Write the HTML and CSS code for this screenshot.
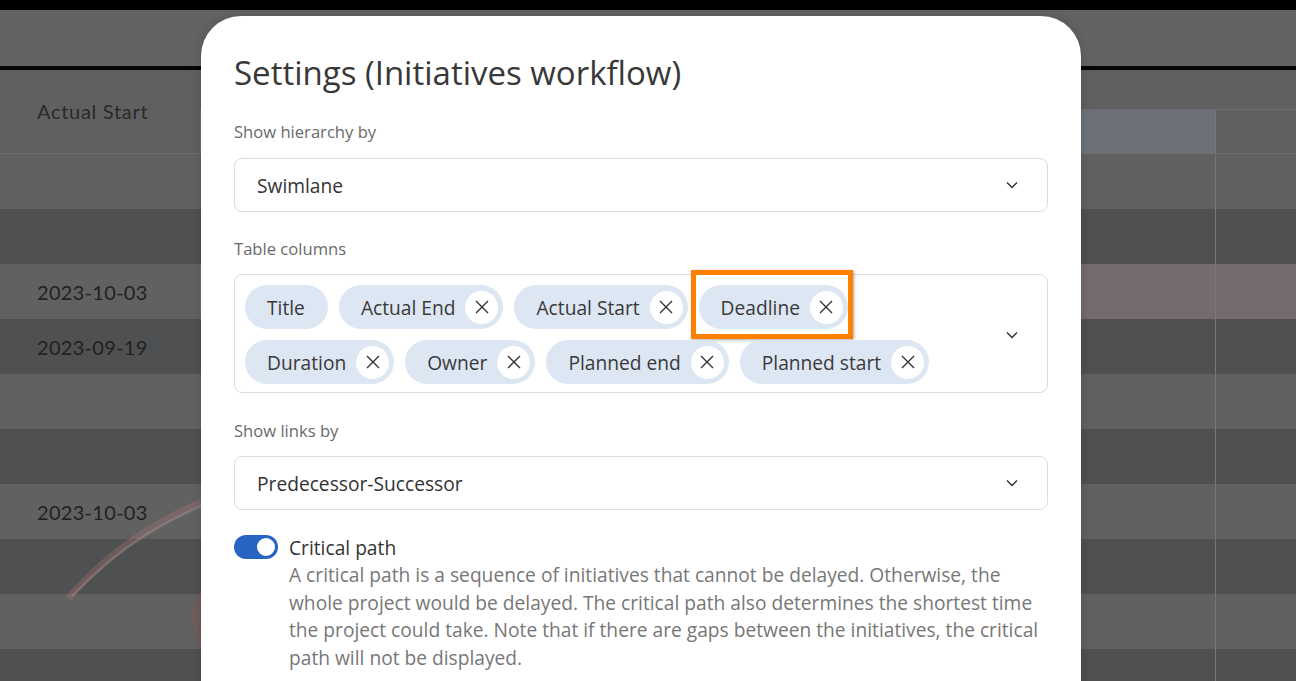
FILE: index.html
```html
<html>
   <head>
      <link rel="stylesheet" href="styles.css">
   </head>
   <body>
      <!-- page behind the dialog (dimmed) -->
      <div class="app">
         <div class="topbar"></div>
         <div class="toolbar"></div>
         <div class="thead">
            <div class="col-date th">Actual Start</div>
            <div class="tl-head">
               <div class="tl-head-top"></div>
               <div class="tl-head-bottom">
                  <div class="tl-cell tl-now"></div>
                  <div class="tl-cell tl-last"></div>
               </div>
            </div>
         </div>
         <div class="row light"><div class="col-date"></div><div class="tl"><div class="tl-cell"></div><div class="tl-cell tl-last"></div></div></div>
         <div class="row dark"><div class="col-date"></div><div class="tl"><div class="tl-cell"></div><div class="tl-cell tl-last"></div></div></div>
         <div class="row light"><div class="col-date">2023-10-03</div><div class="tl pink"><div class="tl-cell"></div><div class="tl-cell tl-last"></div></div></div>
         <div class="row dark"><div class="col-date">2023-09-19</div><div class="tl"><div class="tl-cell"></div><div class="tl-cell tl-last"></div></div></div>
         <div class="row light"><div class="col-date"></div><div class="tl"><div class="tl-cell"></div><div class="tl-cell tl-last"></div></div></div>
         <div class="row dark"><div class="col-date"></div><div class="tl"><div class="tl-cell"></div><div class="tl-cell tl-last"></div></div></div>
         <div class="row light"><div class="col-date">2023-10-03</div><div class="tl"><div class="tl-cell"></div><div class="tl-cell tl-last"></div></div></div>
         <div class="row dark"><div class="col-date"></div><div class="tl"><div class="tl-cell"></div><div class="tl-cell tl-last"></div></div></div>
         <div class="row light"><div class="col-date"></div><div class="tl"><div class="tl-cell"></div><div class="tl-cell tl-last"></div></div></div>
         <div class="row dark"><div class="col-date"></div><div class="tl"><div class="tl-cell"></div><div class="tl-cell tl-last"></div></div></div>
         <!-- faint link curve drawn on the gantt -->
         <svg class="curve" width="300" height="260" viewBox="0 0 300 260">
            <path d="M68 118 C 110 72, 160 32, 260 0" fill="none" stroke="rgba(185,120,120,0.28)" stroke-width="7"/>
            <path d="M72 116 C 114 72, 164 34, 262 4" fill="none" stroke="rgba(230,230,230,0.16)" stroke-width="2.5"/>
            <path d="M203 165 C 190 135, 196 118, 212 110" fill="none" stroke="rgba(150,85,85,0.3)" stroke-width="8"/>
         </svg>
      </div>

      <!-- settings dialog -->
      <div class="modal">
         <h1 class="modal-title">Settings (Initiatives workflow)</h1>

         <div class="field first">
            <div class="field-label">Show hierarchy by</div>
            <div class="select">
               <span>Swimlane</span>
               <svg class="chevron" width="12" height="8" viewBox="0 0 12 8"><path d="M1 1.5 L6 6.5 L11 1.5" fill="none" stroke="#333" stroke-width="1.5"/></svg>
            </div>
         </div>

         <div class="field">
            <div class="field-label">Table columns</div>
            <div class="multi">
               <div class="chips">
                  <span class="chip plain">Title</span>
                  <span class="chip">Actual End<span class="chip-x"><svg width="14" height="14" viewBox="0 0 14 14"><path d="M1 1 L13 13 M13 1 L1 13" stroke="#333" stroke-width="1.4"/></svg></span></span>
                  <span class="chip">Actual Start<span class="chip-x"><svg width="14" height="14" viewBox="0 0 14 14"><path d="M1 1 L13 13 M13 1 L1 13" stroke="#333" stroke-width="1.4"/></svg></span></span>
                  <span class="chip marked">Deadline<span class="chip-x"><svg width="14" height="14" viewBox="0 0 14 14"><path d="M1 1 L13 13 M13 1 L1 13" stroke="#333" stroke-width="1.4"/></svg></span></span>
                  <span class="chip">Duration<span class="chip-x"><svg width="14" height="14" viewBox="0 0 14 14"><path d="M1 1 L13 13 M13 1 L1 13" stroke="#333" stroke-width="1.4"/></svg></span></span>
                  <span class="chip">Owner<span class="chip-x"><svg width="14" height="14" viewBox="0 0 14 14"><path d="M1 1 L13 13 M13 1 L1 13" stroke="#333" stroke-width="1.4"/></svg></span></span>
                  <span class="chip">Planned end<span class="chip-x"><svg width="14" height="14" viewBox="0 0 14 14"><path d="M1 1 L13 13 M13 1 L1 13" stroke="#333" stroke-width="1.4"/></svg></span></span>
                  <span class="chip">Planned start<span class="chip-x"><svg width="14" height="14" viewBox="0 0 14 14"><path d="M1 1 L13 13 M13 1 L1 13" stroke="#333" stroke-width="1.4"/></svg></span></span>
               </div>
               <svg class="chevron" width="12" height="8" viewBox="0 0 12 8"><path d="M1 1.5 L6 6.5 L11 1.5" fill="none" stroke="#333" stroke-width="1.5"/></svg>
            </div>
         </div>

         <div class="field links">
            <div class="field-label">Show links by</div>
            <div class="select">
               <span>Predecessor-Successor</span>
               <svg class="chevron" width="12" height="8" viewBox="0 0 12 8"><path d="M1 1.5 L6 6.5 L11 1.5" fill="none" stroke="#333" stroke-width="1.5"/></svg>
            </div>
         </div>

         <div class="switch-row">
            <div class="toggle"><div class="knob"></div></div>
            <div class="switch-text">
               <div class="switch-title">Critical path</div>
               <div class="switch-desc">A critical path is a sequence of initiatives that cannot be delayed. Otherwise, the whole project would be delayed. The critical path also determines the shortest time the project could take. Note that if there are gaps between the initiatives, the critical path will not be displayed.</div>
            </div>
         </div>
      </div>
   </body>
</html>
```

FILE: styles.css
```css
*
{
   margin: 0px;
   box-sizing: border-box;
}
body
{
   background-color: #4f5051;
   overflow: hidden;
   font-family: "Open Sans", "Noto Sans", sans-serif;
}
/* dimmed page */
.app
{
   position: relative;
   height: 681px;
   overflow: hidden;
   font-family: Lato, "Open Sans", sans-serif;
   color: #262626;
}
.topbar
{
   height: 10px;
   background-color: #000;
}
.toolbar
{
   height: 56px;
   background-color: #636363;
   border-bottom: 4px solid #050505;
   box-sizing: content-box;
}
.thead
{
   display: flex;
   height: 84px;
   background-color: #606060;
   border-bottom: 1px solid #6f6f6f;
}
.col-date
{
   width: 200px;
   padding-left: 37px;
   display: flex;
   align-items: center;
   font-size: 20px;
   letter-spacing: 0.3px;
   color: #222;
   flex-shrink: 0;
}
.th
{
   color: #2a2a2a;
   letter-spacing: 0.7px;
   padding-bottom: 2px;
}
.tl-head
{
   flex: 1;
   display: flex;
   flex-direction: column;
}
.tl-head-top
{
   height: 40px;
   border-bottom: 1px solid #6d6d6d;
}
.tl-head-bottom
{
   flex: 1;
   display: flex;
}
.tl-cell
{
   flex: 1;
}
.tl-now
{
   background-color: #6c7079;
}
.tl-last
{
   flex: 0 0 81px;
   border-left: 1px solid #777;
}
.row
{
   display: flex;
   height: 55px;
}
.light
{
   background-color: #616161;
}
.dark
{
   background-color: #4f5051;
}
.tl
{
   flex: 1;
   display: flex;
}
.pink
{
   background-color: #756a6c;
}
.curve
{
   position: absolute;
   left: 0px;
   top: 480px;
}

/* dialog */
.modal
{
   position: absolute;
   left: 201px;
   top: 16px;
   width: 880px;
   height: 720px;
   background-color: #fff;
   border-radius: 40px;
   padding: 37px 33px 0px 33px;
   box-shadow: 0px 0px 12px rgba(0, 0, 0, 0.15);
}
.modal-title
{
   font-size: 33px;
   line-height: 40px;
   font-weight: 400;
   color: #383838;
}
.field
{
   margin-top: 26px;
}
.field.first
{
   margin-top: 28px;
}
.field.links
{
   margin-top: 27px;
}
.field-label
{
   font-size: 16.6px;
   line-height: 22px;
   color: #6a6a6a;
   margin-bottom: 14px;
}
.field.first .field-label
{
   margin-bottom: 15px;
}
.select
{
   height: 54px;
   border: 1px solid #d5dde5;
   border-radius: 8px;
   display: flex;
   align-items: center;
   justify-content: space-between;
   padding: 0px 29px 0px 22px;
   font-size: 19.2px;
   color: #333;
}
.multi
{
   border: 1px solid #d5dde5;
   border-radius: 8px;
   display: flex;
   align-items: center;
   padding: 10px 29px 8px 10px;
}
.chips
{
   flex: 1;
   display: flex;
   flex-wrap: wrap;
   gap: 11px;
   margin-right: 40px;
}
.chip
{
   position: relative;
   height: 44px;
   display: flex;
   align-items: center;
   background-color: #dde6f3;
   border-radius: 22px;
   padding: 0px 5px 0px 22px;
   font-size: 19.2px;
   color: #3a3a3a;
}
.chip.plain
{
   padding-right: 23px;
}
.chip-x
{
   width: 33px;
   height: 33px;
   margin-left: 10px;
   border-radius: 50%;
   background-color: #fff;
   display: flex;
   align-items: center;
   justify-content: center;
}
/* orange callout around the chip */
.chip.marked::after
{
   content: "";
   position: absolute;
   left: -8px;
   right: -5px;
   top: -15px;
   bottom: -10px;
   border: 5px solid #ff8000;
   box-shadow: 1px 1px 3px rgba(0, 0, 0, 0.35);
}
.switch-row
{
   display: flex;
   align-items: flex-start;
   margin-top: 24px;
}
.toggle
{
   width: 44px;
   height: 24px;
   margin-top: 1px;
   border-radius: 12px;
   background-color: #2764c4;
   display: flex;
   align-items: center;
   justify-content: flex-end;
   padding-right: 3px;
   flex-shrink: 0;
}
.knob
{
   width: 18px;
   height: 18px;
   border-radius: 50%;
   background-color: #fff;
}
.switch-text
{
   margin-left: 11px;
}
.switch-title
{
   font-size: 19.2px;
   line-height: 27px;
   color: #333;
}
.switch-desc
{
   font-size: 19.2px;
   line-height: 27.6px;
   color: #777;
}
```
